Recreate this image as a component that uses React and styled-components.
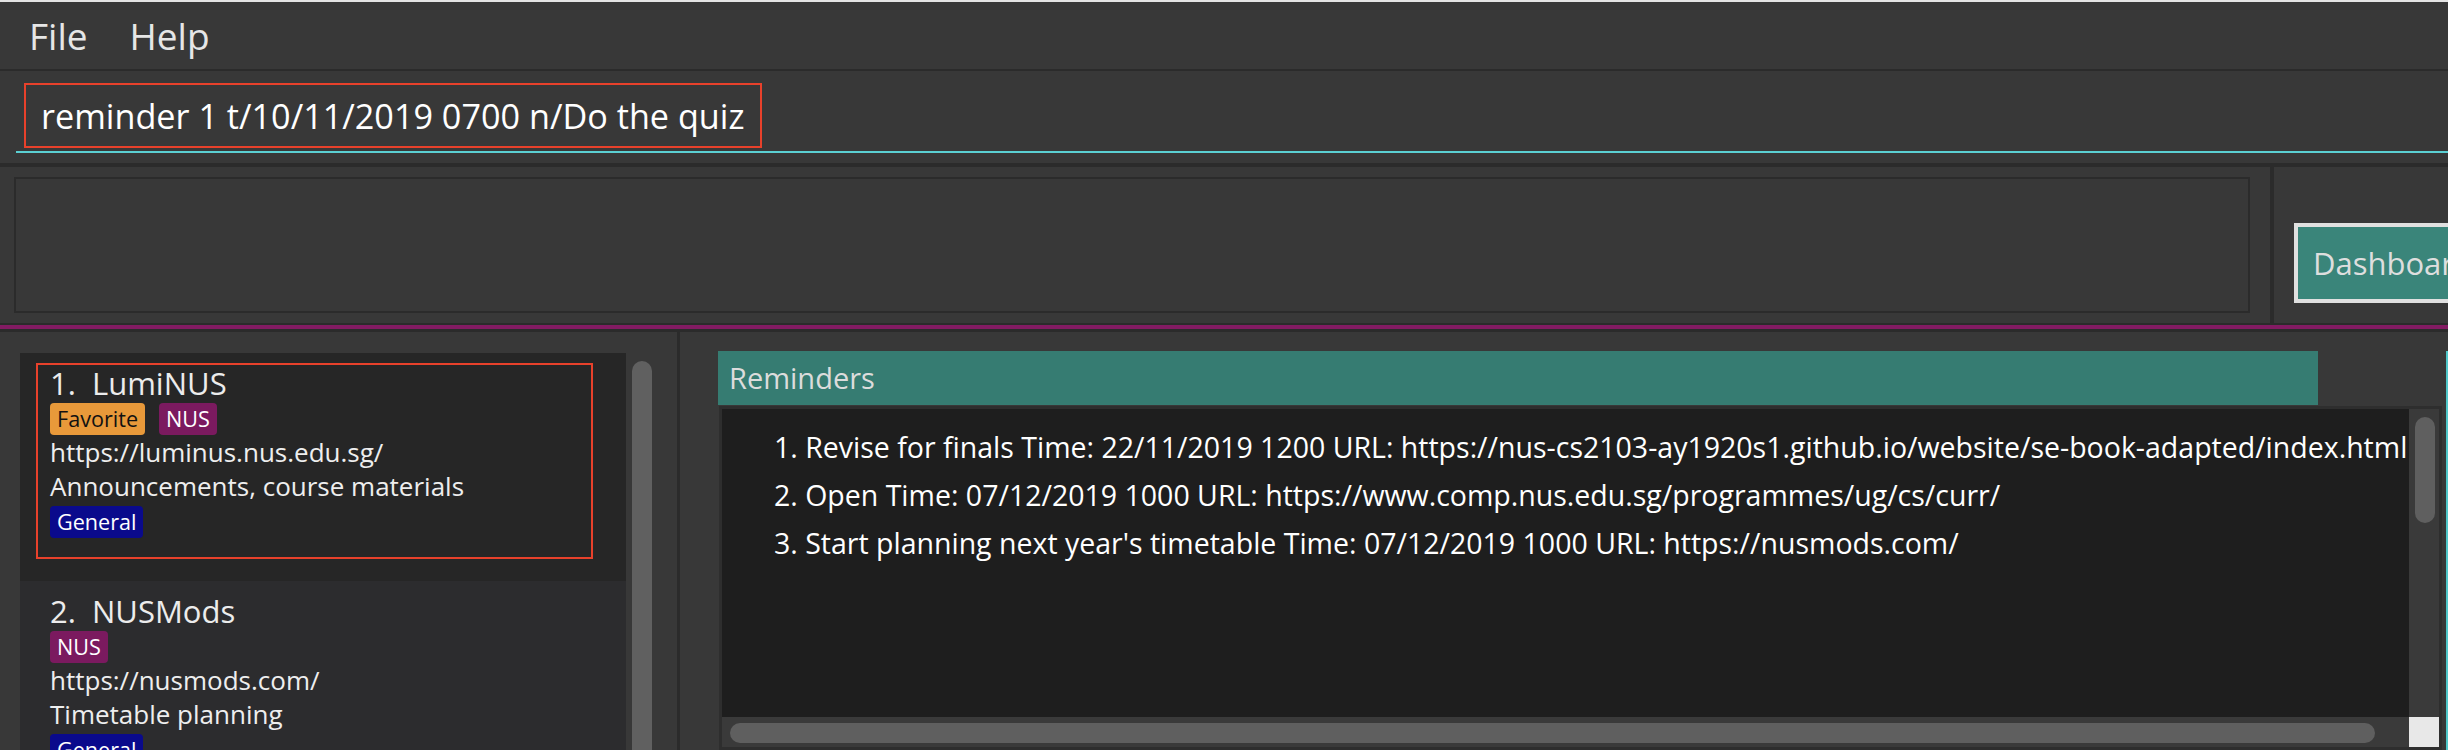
import React from "react";
import styled, { createGlobalStyle } from "styled-components";

const dark = `#2b2b2b`;
const panel = `#383838`;
const teal = `#367c72`;

const GlobalStyle = createGlobalStyle`
  * {
    box-sizing: border-box;
  }
  html,
  body {
    margin: 0;
    padding: 0;
    background: ${panel};
    overflow: hidden;
  }
`;

const Window = styled.div`
  width: 2448px;
  height: 750px;
  display: flex;
  flex-direction: column;
  background: ${panel};
  border-top: 2px solid #e4e4e4;
  overflow: hidden;
  font-family: "Open Sans", "Noto Sans", sans-serif;
  color: #ececec;
`;

const MenuBar = styled.div`
  height: 69px;
  flex-shrink: 0;
  display: flex;
  align-items: center;
  padding-left: 8px;
  border-bottom: 2px solid ${dark};
`;

const MenuItem = styled.span`
  padding: 0 21px;
  font-size: 37px;
  line-height: 67px;
  color: #e6e6e6;
`;

const CommandSection = styled.div`
  height: 96px;
  flex-shrink: 0;
  padding: 12px 0 0 16px;
  border-bottom: 4px solid ${dark};
`;

const CommandField = styled.div`
  padding: 0 0 3px 8px;
  border-bottom: 2px solid #5bd0d3;
`;

const CommandBox = styled.div`
  width: 738px;
  height: 65px;
  padding-left: 15px;
  border: 2px solid #e8412b;
  font-size: 34.2px;
  line-height: 61px;
  color: #ffffff;
  white-space: nowrap;
`;

const ResultSection = styled.div`
  height: 156px;
  flex-shrink: 0;
  display: flex;
`;

const ResultBox = styled.div`
  width: 2236px;
  flex-shrink: 0;
  margin: 10px 20px 10px 14px;
  border: 2px solid ${dark};
`;

const VDivider = styled.div`
  width: 4px;
  flex-shrink: 0;
  background: ${dark};
`;

const ButtonArea = styled.div`
  flex: 1;
  min-width: 0;
  display: flex;
  align-items: flex-end;
  padding: 0 0 20px 20px;
  overflow: hidden;
`;

const TabButton = styled.div`
  flex-shrink: 0;
  height: 80px;
  padding: 0 15px;
  border: 4px solid #e0e0e0;
  background: #3a857a;
  font-size: 31px;
  line-height: 72px;
  color: #dedede;
  white-space: nowrap;
`;

const AccentDivider = styled.div`
  height: 9px;
  flex-shrink: 0;
  background: #831b63;
  border-top: 2px solid ${dark};
  border-bottom: 3px solid ${dark};
`;

const Main = styled.div`
  flex: 1;
  min-height: 0;
  display: flex;
`;

const LeftPanel = styled.div`
  width: 680px;
  flex-shrink: 0;
  display: flex;
  padding: 21px 0 0 20px;
  border-right: 3px solid ${dark};
  overflow: hidden;
`;

const CardList = styled.div`
  width: 606px;
  display: flex;
  flex-direction: column;
  background: #2c2c2e;
`;

const Card = styled.div`
  flex-shrink: 0;
  padding: 10px 33px 22px 16px;
  background: ${({ selected }) => (selected ? `#262626` : `#2c2c2e`)};
`;

const CardInner = styled.div`
  padding: 1px 12px 19px 12px;
  border: 2px solid ${({ selected }) => (selected ? `#e8412b` : `transparent`)};
`;

const CardTitle = styled.div`
  font-size: 31px;
  line-height: 34px;
  white-space: pre;
  color: #ececec;
`;

const TagRow = styled.div`
  display: flex;
  gap: 14px;
  margin-top: 3px;
`;

const Tag = styled.span`
  height: 32px;
  padding: 0 7px;
  border-radius: 4px;
  font-size: 21.6px;
  line-height: 32px;
  background: ${({ bg }) => bg};
  color: ${({ fg }) => fg || `#ffffff`};
`;

const CardLine = styled.div`
  font-size: 26px;
  line-height: 34px;
  color: #eeeeee;
  white-space: nowrap;
`;

const ListScroll = styled.div`
  width: 20px;
  height: 600px;
  margin: 8px 0 0 6px;
  border-radius: 10px;
  background: #606060;
  flex-shrink: 0;
`;

const RightPanel = styled.div`
  flex: 1;
  min-width: 0;
  display: flex;
  padding: 19px 0 0 38px;
  overflow: hidden;
`;

const ReminderColumn = styled.div`
  width: 1724px;
  flex-shrink: 0;
  display: flex;
  flex-direction: column;
`;

const PanelHeader = styled.div`
  width: 1600px;
  height: 54px;
  padding-left: 11px;
  background: ${teal};
  font-size: 29px;
  line-height: 54px;
  color: #dcdcdc;
`;

const ReminderBox = styled.div`
  flex: 1;
  min-height: 0;
  margin: 1px 0 0 1px;
  display: flex;
  flex-direction: column;
  border: 3px solid #2e2e2e;
`;

const ReminderBody = styled.div`
  flex: 1;
  min-height: 0;
  display: flex;
`;

const ReminderText = styled.div`
  flex: 1;
  min-width: 0;
  padding: 14px 0 0 52px;
  background: #1e1e1e;
  overflow: hidden;
`;

const ReminderLine = styled.div`
  font-size: 28.5px;
  line-height: 48px;
  color: #ffffff;
  white-space: nowrap;
`;

const VTrack = styled.div`
  width: 30px;
  flex-shrink: 0;
  background: #3a3a3a;
  padding: 8px 6px 0 6px;
`;

const HTrackRow = styled.div`
  height: 30px;
  flex-shrink: 0;
  display: flex;
`;

const HTrack = styled.div`
  flex: 1;
  background: #3a3a3a;
  padding: 6px 0 0 8px;
`;

const Thumb = styled.div`
  width: ${({ w }) => w};
  height: ${({ h }) => h};
  border-radius: 10px;
  background: #5f5f5f;
`;

const Corner = styled.div`
  width: 30px;
  flex-shrink: 0;
  background: #e8e8e8;
`;

const NextPanelEdge = styled.div`
  width: 2px;
  margin-left: 4px;
  flex-shrink: 0;
  background: #4fc7c9;
`;

const links = [
  {
    name: "LumiNUS",
    tags: [
      { label: "Favorite", bg: "#e8993a", fg: "#111111" },
      { label: "NUS", bg: "#7b1a5f" },
    ],
    url: "https://luminus.nus.edu.sg/",
    remark: "Announcements, course materials",
    folder: "General",
  },
  {
    name: "NUSMods",
    tags: [{ label: "NUS", bg: "#7b1a5f" }],
    url: "https://nusmods.com/",
    remark: "Timetable planning",
    folder: "General",
  },
];

const reminders = [
  "Revise for finals Time: 22/11/2019 1200 URL: https://nus-cs2103-ay1920s1.github.io/website/se-book-adapted/index.html",
  "Open Time: 07/12/2019 1000 URL: https://www.comp.nus.edu.sg/programmes/ug/cs/curr/",
  "Start planning next year's timetable Time: 07/12/2019 1000 URL: https://nusmods.com/",
];

const LinkCard = ({ index, link, selected }) => (
  <Card selected={selected}>
    <CardInner selected={selected}>
      <CardTitle>{`${index}.  ${link.name}`}</CardTitle>
      <TagRow>
        {link.tags.map((t) => (
          <Tag key={t.label} bg={t.bg} fg={t.fg}>
            {t.label}
          </Tag>
        ))}
      </TagRow>
      <CardLine>{link.url}</CardLine>
      <CardLine>{link.remark}</CardLine>
      <TagRow>
        <Tag bg="#0a0a8c">{link.folder}</Tag>
      </TagRow>
    </CardInner>
  </Card>
);

const App = () => {
  return (
    <Window>
      <GlobalStyle />
      <MenuBar>
        <MenuItem>File</MenuItem>
        <MenuItem>Help</MenuItem>
      </MenuBar>

      <CommandSection>
        <CommandField>
          <CommandBox>reminder 1 t/10/11/2019 0700 n/Do the quiz</CommandBox>
        </CommandField>
      </CommandSection>

      <ResultSection>
        <ResultBox />
        <VDivider />
        <ButtonArea>
          <TabButton>Dashboard</TabButton>
        </ButtonArea>
      </ResultSection>

      <AccentDivider />

      <Main>
        <LeftPanel>
          <CardList>
            {links.map((l, i) => (
              <LinkCard key={l.name} index={i + 1} link={l} selected={i === 0} />
            ))}
          </CardList>
          <ListScroll />
        </LeftPanel>

        <RightPanel>
          <ReminderColumn>
            <PanelHeader>Reminders</PanelHeader>
            <ReminderBox>
              <ReminderBody>
                <ReminderText>
                  {reminders.map((r, i) => (
                    <ReminderLine key={i}>{`${i + 1}. ${r}`}</ReminderLine>
                  ))}
                </ReminderText>
                <VTrack>
                  <Thumb w="20px" h="106px" />
                </VTrack>
              </ReminderBody>
              <HTrackRow>
                <HTrack>
                  <Thumb w="1645px" h="20px" />
                </HTrack>
                <Corner />
              </HTrackRow>
            </ReminderBox>
          </ReminderColumn>
          <NextPanelEdge />
        </RightPanel>
      </Main>
    </Window>
  );
};

export default App;
